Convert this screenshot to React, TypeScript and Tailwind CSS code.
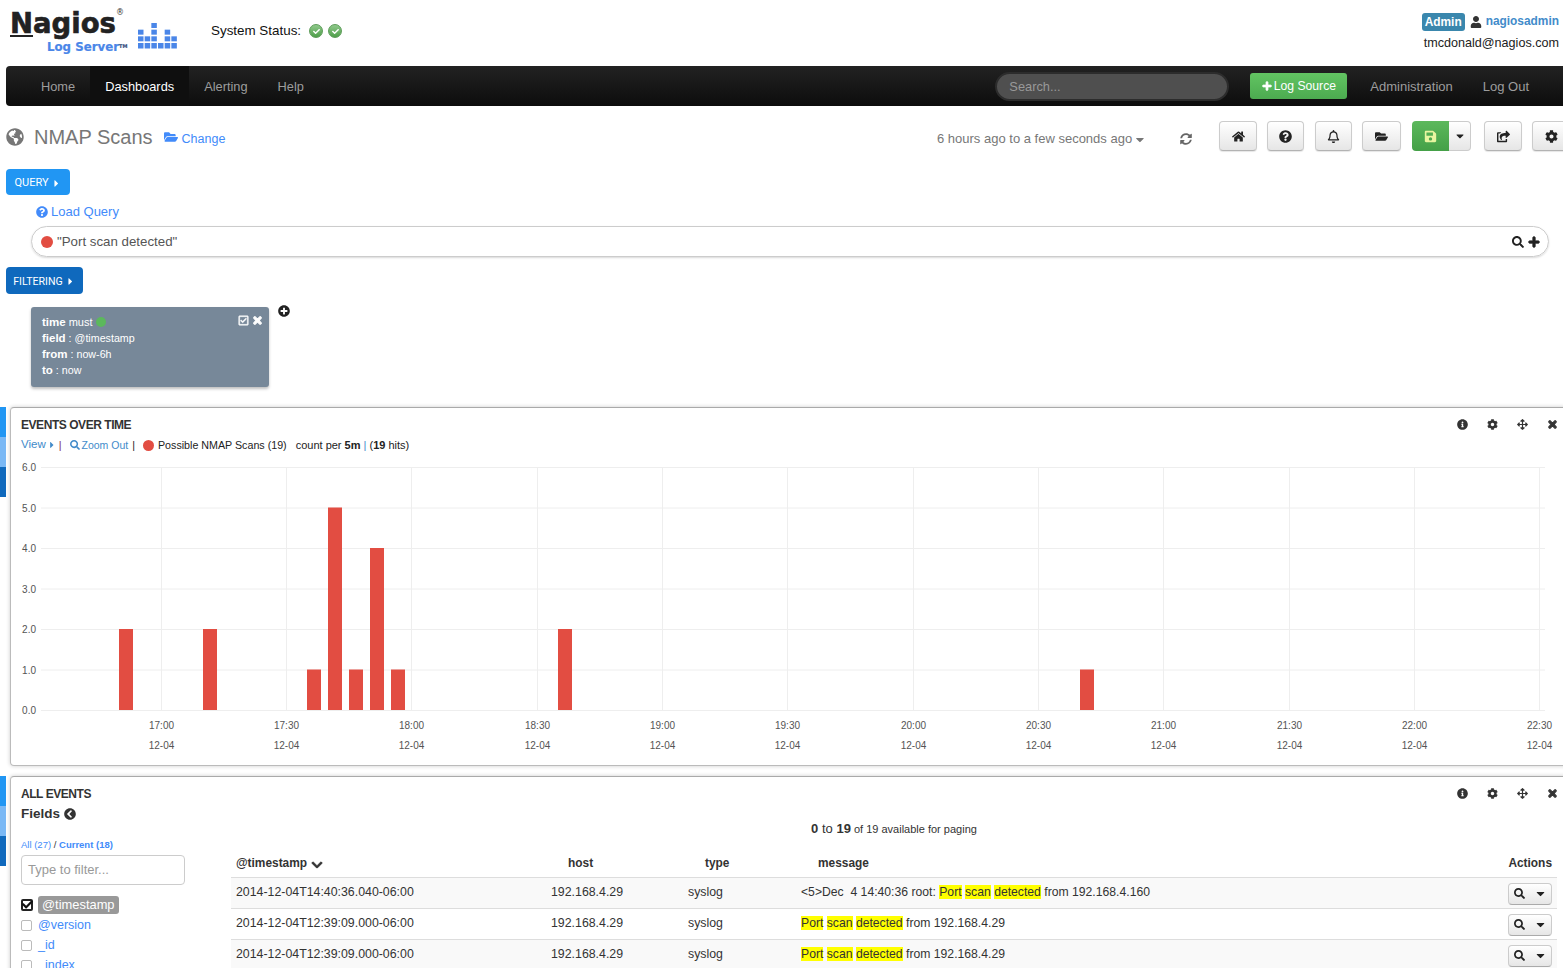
import React from "react";
import {
  FaGlobeAmericas, FaFolderOpen, FaCaretRight, FaCaretDown, FaQuestionCircle, FaPlus, FaSearch, FaRegCheckSquare,
  FaTimes, FaPlusCircle, FaInfoCircle, FaCog, FaArrowsAlt, FaChevronCircleLeft, FaChevronDown, FaHome, FaRegBell, FaSave, FaShareSquare, FaSyncAlt, FaUser, FaCheck,
} from "react-icons/fa";

const bars: [number, number][] = [[119, 2], [203, 2], [307, 1], [328, 5], [349, 1], [370, 4], [391, 1], [558, 2], [1080, 1]];
const gridX = [161.5, 286.5, 411.5, 537.5, 662.5, 787.5, 913.5, 1038.5, 1163.5, 1289.5, 1414.5, 1539.5];
const times = ["17:00", "17:30", "18:00", "18:30", "19:00", "19:30", "20:00", "20:30", "21:00", "21:30", "22:00", "22:30"];
const yLabels = ["6.0", "5.0", "4.0", "3.0", "2.0", "1.0", "0.0"];
const logoCols = [3, 2, 4, 1, 3, 2];

function Status() {
  return (
    <span className="w-[14px] h-[14px] rounded-full bg-gradient-to-b from-[#8fc98b] to-[#4f9f4a] border border-[#5c9c58] flex items-center justify-center text-white text-[7px]">
      <FaCheck />
    </span>
  );
}

function Tool({ children, w }: { children: React.ReactNode; w: string }) {
  return (
    <button className={`${w} shrink-0 h-[30px] flex items-center justify-center rounded-[4px] border border-[#ccc] border-b-[#b3b3b3] bg-gradient-to-b from-white to-[#e6e6e6] text-[#222] text-[13px] shadow-[0_1px_1px_rgba(0,0,0,0.1)]`}>
      {children}
    </button>
  );
}

function PanelIcons() {
  return (
    <div className="flex items-center text-[#333] text-[11px] absolute top-[11px] right-[11px] gap-[19px]">
      <FaInfoCircle />
      <FaCog />
      <FaArrowsAlt />
      <FaTimes className="[stroke-width:50]" />
    </div>
  );
}

function Stripe() {
  return (
    <div className="w-[6px] h-[90px] shrink-0 flex flex-col">
      <div className="h-[30px] bg-[#2196f3]" />
      <div className="h-[30px] bg-[#7ab8f5]" />
      <div className="h-[30px] bg-[#0f69bd]" />
    </div>
  );
}

function Hl({ children }: { children: React.ReactNode }) {
  return <span className="bg-[#ffff00]">{children}</span>;
}

function Row({ ts, msg, shade }: { ts: string; msg: React.ReactNode; shade?: boolean }) {
  return (
    <div className={`grid grid-cols-[315px_137px_113px_1fr_50px] items-center h-[31px] border-t border-[#ddd] pl-[5px] pr-[5px] pb-[2px] text-[12.35px] text-[#333] ${shade ? "bg-[#f9f9f9]" : "bg-white"}`}>
      <span>{ts}</span>
      <span>192.168.4.29</span>
      <span>syslog</span>
      <span className="whitespace-pre text-[12.2px]">{msg}</span>
      <button className="justify-self-end w-[44px] h-[22px] mt-[3px] rounded-[4px] border border-[#ccc] border-b-[#aaa] bg-gradient-to-b from-white to-[#e6e6e6] flex items-center justify-center gap-[9px] text-[#222] text-[11px]">
        <FaSearch />
        <FaCaretDown className="text-[13px]" />
      </button>
    </div>
  );
}

export default function App() {
  return (
    <div className="w-[1563px] h-[968px] overflow-hidden bg-white text-[#333] font-['Liberation_Sans',Arial,sans-serif]">
      <header className="h-[66px] flex pl-[10px] pr-[4px]">
        <div className="relative w-[128px] shrink-0 h-[66px] font-['DejaVu_Sans',sans-serif] font-bold">
          <span className="absolute left-0 top-[5px] text-[27.5px] leading-[36px] text-[#222] [-webkit-text-stroke:0.6px_#222]">
            <span className="underline decoration-2 underline-offset-2">N</span>agios
          </span>
          <span className="absolute left-[106px] top-[8px] text-[8px] leading-[10px] font-normal text-[#333]">®</span>
          <span className="absolute left-[37px] top-[39px] text-[11.8px] leading-[16px] text-[#4a86e8] whitespace-nowrap [-webkit-text-stroke:0.2px_#4a86e8]">
            Log Server<sup className="text-[5px] text-[#333] relative -top-[3px]">TM</sup>
          </span>
        </div>
        <svg width="40" height="26" viewBox="0 0 40 26" className="mt-[23px] shrink-0" fill="#4a86e8">
          {logoCols.map((n, c) =>
            Array.from({ length: n }, (_, r) => (
              <rect key={`${c}-${r}`} x={c * 6.67} y={20 - r * 6.67} width="5.5" height={r === 0 ? 5.5 : 5} />
            ))
          )}
        </svg>
        <div className="ml-[33px] mt-[23px] h-[16px] flex items-center text-[13.4px] leading-[16px] text-[#111] gap-[5px]">
          <span className="mr-[3px]">System Status:</span>
          <Status />
          <Status />
        </div>
        <div className="ml-auto flex flex-col items-end mt-[13px]">
          <div className="flex items-center h-[18px] text-[11.9px] font-bold">
            <span className="bg-[#3a87ad] text-white rounded-[3px] px-[3px] h-[18px] leading-[18px]">Admin</span>
            <FaUser className="ml-[5px] mr-[4px] text-[#333] text-[12px]" />
            <span className="text-[#428bca]">nagiosadmin</span>
          </div>
          <div className="text-[12.6px] text-[#222] mt-[3px] leading-[18px]">tmcdonald@nagios.com</div>
        </div>
      </header>

      <nav className="ml-[6px] h-[40px] rounded-l-[4px] bg-gradient-to-b from-[#222] to-[#0d0d0d] flex items-center text-[12.8px] text-[#9d9d9d]">
        <a className="ml-[20px] px-[15px] h-[40px] pt-px leading-[40px]">Home</a>
        <a className="px-[15px] h-[40px] pt-px leading-[40px] bg-[#0f0f0f] text-white">Dashboards</a>
        <a className="px-[15px] h-[40px] pt-px leading-[40px]">Alerting</a>
        <a className="px-[15px] h-[40px] pt-px leading-[40px]">Help</a>
        <div className="ml-auto w-[234px] h-[29px] rounded-full bg-[#4f4f4f] border-2 border-[#2c2c2c] flex items-center pl-[12px] pt-[2px] text-[#999]">Search...</div>
        <button className="ml-[21px] w-[97px] h-[26px] rounded-[3px] bg-gradient-to-b from-[#62c462] to-[#4cab50] text-white text-[12.2px] flex items-center justify-center gap-[2px]">
          <FaPlus className="text-[10px] [stroke-width:40]" />Log Source
        </button>
        <a className="ml-[23px] text-[13px] h-[40px] pt-px leading-[40px]">Administration</a>
        <a className="ml-[30px] mr-[34px] text-[13px] h-[40px] pt-px leading-[40px]">Log Out</a>
      </nav>

      <div className="h-[63px] pl-[6px] flex items-start whitespace-nowrap">
        <div className="flex items-center mt-[20px] h-[22px] w-[219px] shrink-0">
          <FaGlobeAmericas className="text-[#777] text-[18px] shrink-0" />
          <span className="ml-[10px] text-[20px] text-[#777]">NMAP Scans</span>
          <FaFolderOpen className="ml-[11px] text-[#428bfa] text-[14px] shrink-0" />
          <span className="ml-[4px] text-[12.5px] text-[#428bfa] mt-[5px]">Change</span>
        </div>
        <div className="ml-[712px] mt-[24px] h-[18px] flex items-center text-[13px] text-[#777] gap-[3px] w-[208px] shrink-0">
          <span>6 hours ago to a few seconds ago</span>
          <FaCaretDown className="text-[13px]" />
        </div>
        <FaSyncAlt className="ml-[35px] mt-[27px] text-[#666] text-[12px] shrink-0" />
        <div className="flex items-start mt-[15px] ml-[27px]">
          <Tool w="w-[38px]"><FaHome /></Tool>
          <div className="w-[10px] shrink-0" />
          <Tool w="w-[37px]"><FaQuestionCircle /></Tool>
          <div className="w-[11px] shrink-0" />
          <Tool w="w-[37px]"><FaRegBell /></Tool>
          <div className="w-[10px] shrink-0" />
          <Tool w="w-[39px]"><FaFolderOpen /></Tool>
          <div className="w-[11px] shrink-0" />
          <button className="w-[37px] h-[30px] shrink-0 rounded-l-[4px] bg-gradient-to-b from-[#5cb85c] to-[#44a047] flex items-center justify-center text-[#e8f5a0] text-[13px]"><FaSave /></button>
          <button className="w-[22px] h-[30px] shrink-0 rounded-r-[4px] border border-l-0 border-[#ccc] bg-gradient-to-b from-white to-[#e6e6e6] flex items-center justify-center text-[#222] text-[12px]"><FaCaretDown /></button>
          <div className="w-[13px] shrink-0" />
          <Tool w="w-[38px]"><FaShareSquare /></Tool>
          <div className="w-[10px] shrink-0" />
          <Tool w="w-[39px]"><FaCog /></Tool>
        </div>
      </div>

      <div className="pl-[6px]">
        <button className="w-[64px] h-[26px] rounded-[4px] bg-[#2196f3] text-white text-[11px] pt-[2px] font-['Roboto',sans-serif] flex items-center justify-center gap-[2px]">QUERY<FaCaretRight className="text-[11px]" /></button>
      </div>
      <div className="ml-[36px] mt-[9px] h-[16px] flex items-center text-[13px] text-[#428bfa] gap-[3px]"><FaQuestionCircle className="text-[12px]" />Load Query</div>
      <div className="ml-[31px] mr-[14px] mt-[6px] h-[31px] rounded-full border border-[#ccc] shadow-[0_1px_2px_rgba(0,0,0,0.15)] flex items-center pl-[9px] pr-[8px] text-[13.3px] text-[#555]">
        <span className="w-[12px] h-[12px] rounded-full bg-[#e24d42] mr-[4px]" />
        <span>"Port scan detected"</span>
        <span className="ml-auto flex items-center gap-[4px] text-[#222] text-[12px]"><FaSearch /><FaPlus className="[stroke-width:40]" /></span>
      </div>
      <div className="pl-[6px] mt-[10px]">
        <button className="w-[77px] h-[27px] rounded-[4px] bg-[#0f69bd] text-white text-[10.6px] pt-[2px] font-['Roboto',sans-serif] flex items-center justify-center gap-[2px]">FILTERING<FaCaretRight className="text-[11px]" /></button>
      </div>
      <div className="ml-[31px] mt-[13px] h-[80px] flex items-start">
        <div className="relative w-[238px] h-[80px] rounded-[3px] bg-[#778899] text-white text-[10.7px] leading-[16px] px-[11px] py-[7px] shadow-[0_2px_3px_rgba(0,0,0,0.25)]">
          <div className="flex items-center"><b className="text-[11.5px]">time</b><span className="ml-[3px] text-[11px]">must</span><span className="ml-[3px] w-[10px] h-[10px] rounded-full bg-[#5cb85c]" /></div>
          <div><b className="text-[11.5px]">field</b> : @timestamp</div>
          <div><b className="text-[11.5px]">from</b> : now-6h</div>
          <div><b className="text-[11.5px]">to</b> : now</div>
          <div className="absolute top-[8px] right-[6px] flex items-center gap-[3px] text-[11px]"><FaRegCheckSquare className="[stroke-width:20]" /><FaTimes className="[stroke-width:50]" /></div>
        </div>
        <FaPlusCircle className="ml-[9px] mt-[-2px] text-[#222] text-[12px]" />
      </div>

      <div className="mt-[20px] flex items-start">
        <Stripe />
        <section className="relative ml-[4px] shrink-0 w-[1560px] h-[359px] rounded-l-[4px] border border-[#bbb] border-t-[#aaa] shadow-[0_0_4px_rgba(0,0,0,0.2)] pl-[10px]">
          <PanelIcons />
          <h2 className="mt-[9px] text-[12px] tracking-[-0.45px] leading-[16px] font-bold text-[#333]">EVENTS OVER TIME</h2>
          <div className="mt-[4px] h-[16px] flex items-center text-[10.7px] text-[#222]">
            <span className="text-[#428bca] flex items-center gap-[1px] text-[11.5px]">View<FaCaretRight className="text-[10px]" /></span>
            <span className="ml-[2px] text-[#7c2d5a]">|</span>
            <FaSearch className="ml-[8px] text-[#428bca] text-[10px]" />
            <span className="ml-[2px] text-[#428bca] text-[10.5px] pt-px">Zoom Out</span>
            <span className="ml-[4px]">|</span>
            <span className="ml-[8px] w-[11px] h-[11px] rounded-full bg-[#e24d42]" />
            <span className="ml-[4px]">Possible NMAP Scans (19)</span>
            <span className="ml-[9px] text-[11px]">count per <b>5m</b> <span className="text-[#428bca]">|</span> (<b>19</b> hits)</span>
          </div>
          <svg width="1552" height="300" viewBox="11 458 1552 300" className="absolute left-0 top-[50px]" fontFamily="Liberation Sans, Arial, sans-serif" fontSize="10" fill="#545454">
            {yLabels.map((l, i) => (
              <g key={l}>
                <line x1="41" x2="1545" y1={467.5 + i * 40.5} y2={467.5 + i * 40.5} stroke="#eeeeee" />
                <text x="36" y={471 + i * 40.5} textAnchor="end">{l}</text>
              </g>
            ))}
            {gridX.map((x, i) => (
              <g key={x}>
                <line x1={x} x2={x} y1="467" y2="710" stroke="#eeeeee" />
                <text x={x} y="729" textAnchor="middle">{times[i]}</text>
                <text x={x} y="749" textAnchor="middle">12-04</text>
              </g>
            ))}
            {bars.map(([x, v]) => (
              <rect key={x} x={x} y={710 - v * 40.5} width="14" height={v * 40.5} fill="#e24d42" />
            ))}
          </svg>
        </section>
      </div>

      <div className="mt-[10px] flex items-start">
        <Stripe />
        <section className="relative ml-[4px] shrink-0 w-[1560px] h-[300px] rounded-l-[4px] border border-[#bbb] border-t-[#aaa] shadow-[0_0_4px_rgba(0,0,0,0.2)] pl-[10px] flex">
          <PanelIcons />
          <div className="w-[200px] shrink-0">
            <h2 className="mt-[9px] text-[12px] tracking-[-0.45px] leading-[16px] font-bold text-[#333]">ALL EVENTS</h2>
            <div className="mt-[2px] flex items-center h-[20px] text-[13.5px] font-bold text-[#333] gap-[4px]">Fields<FaChevronCircleLeft className="text-[12px]" /></div>
            <div className="mt-[14px] h-[14px] text-[9.5px] leading-[14px] text-[#428bfa]">All (27) <span className="text-[#333]">/</span> <span className="font-bold">Current (18)</span></div>
            <div className="mt-[3px] w-[164px] h-[30px] rounded-[4px] border border-[#ccc] pl-[6px] leading-[27px] text-[13px] text-[#999]">Type to filter...</div>
            <div className="mt-[10px] flex flex-col text-[12.5px] text-[#428bfa]">
              <div className="flex items-center h-[20px]">
                <span className="relative w-[12px] h-[12px] rounded-[2px] border-2 border-[#222] mr-[5px] bg-white shrink-0">
                  <FaCheck className="absolute -top-[2px] -left-[1px] text-[11px] text-[#111]" />
                </span>
                <span className="bg-[#999] text-white rounded-[3px] px-[4px] leading-[18px] text-[12.9px]">@timestamp</span>
              </div>
              <div className="flex items-center h-[20px]"><span className="w-[11px] h-[11px] rounded-[2px] border border-[#bbb] mr-[6px]" /><span>@version</span></div>
              <div className="flex items-center h-[20px]"><span className="w-[11px] h-[11px] rounded-[2px] border border-[#bbb] mr-[6px]" /><span>_id</span></div>
              <div className="flex items-center h-[20px]"><span className="w-[11px] h-[11px] rounded-[2px] border border-[#bbb] mr-[6px]" /><span>_index</span></div>
            </div>
          </div>
          <div className="ml-[10px] w-[1326px]">
            <div className="mt-[44px] text-center text-[11px] leading-[16px]"><span className="text-[13px]"><b>0</b> to <b>19</b></span> of 19 available for paging</div>
            <div className="grid grid-cols-[332px_137px_113px_1fr_auto] items-center h-[28px] pt-[2px] mt-[12px] pl-[5px] pr-[5px] text-[11.9px] font-bold text-[#333]">
              <span className="flex items-center gap-[4px]">@timestamp<FaChevronDown className="text-[12px] mt-[2px] [stroke-width:30]" /></span>
              <span>host</span>
              <span>type</span>
              <span>message</span>
              <span>Actions</span>
            </div>
            <Row shade ts="2014-12-04T14:40:36.040-06:00" msg={<>&lt;5&gt;Dec  4 14:40:36 root: <Hl>Port</Hl> <Hl>scan</Hl> <Hl>detected</Hl> from 192.168.4.160</>} />
            <Row ts="2014-12-04T12:39:09.000-06:00" msg={<><Hl>Port</Hl> <Hl>scan</Hl> <Hl>detected</Hl> from 192.168.4.29</>} />
            <Row shade ts="2014-12-04T12:39:09.000-06:00" msg={<><Hl>Port</Hl> <Hl>scan</Hl> <Hl>detected</Hl> from 192.168.4.29</>} />
          </div>
        </section>
      </div>
    </div>
  );
}
